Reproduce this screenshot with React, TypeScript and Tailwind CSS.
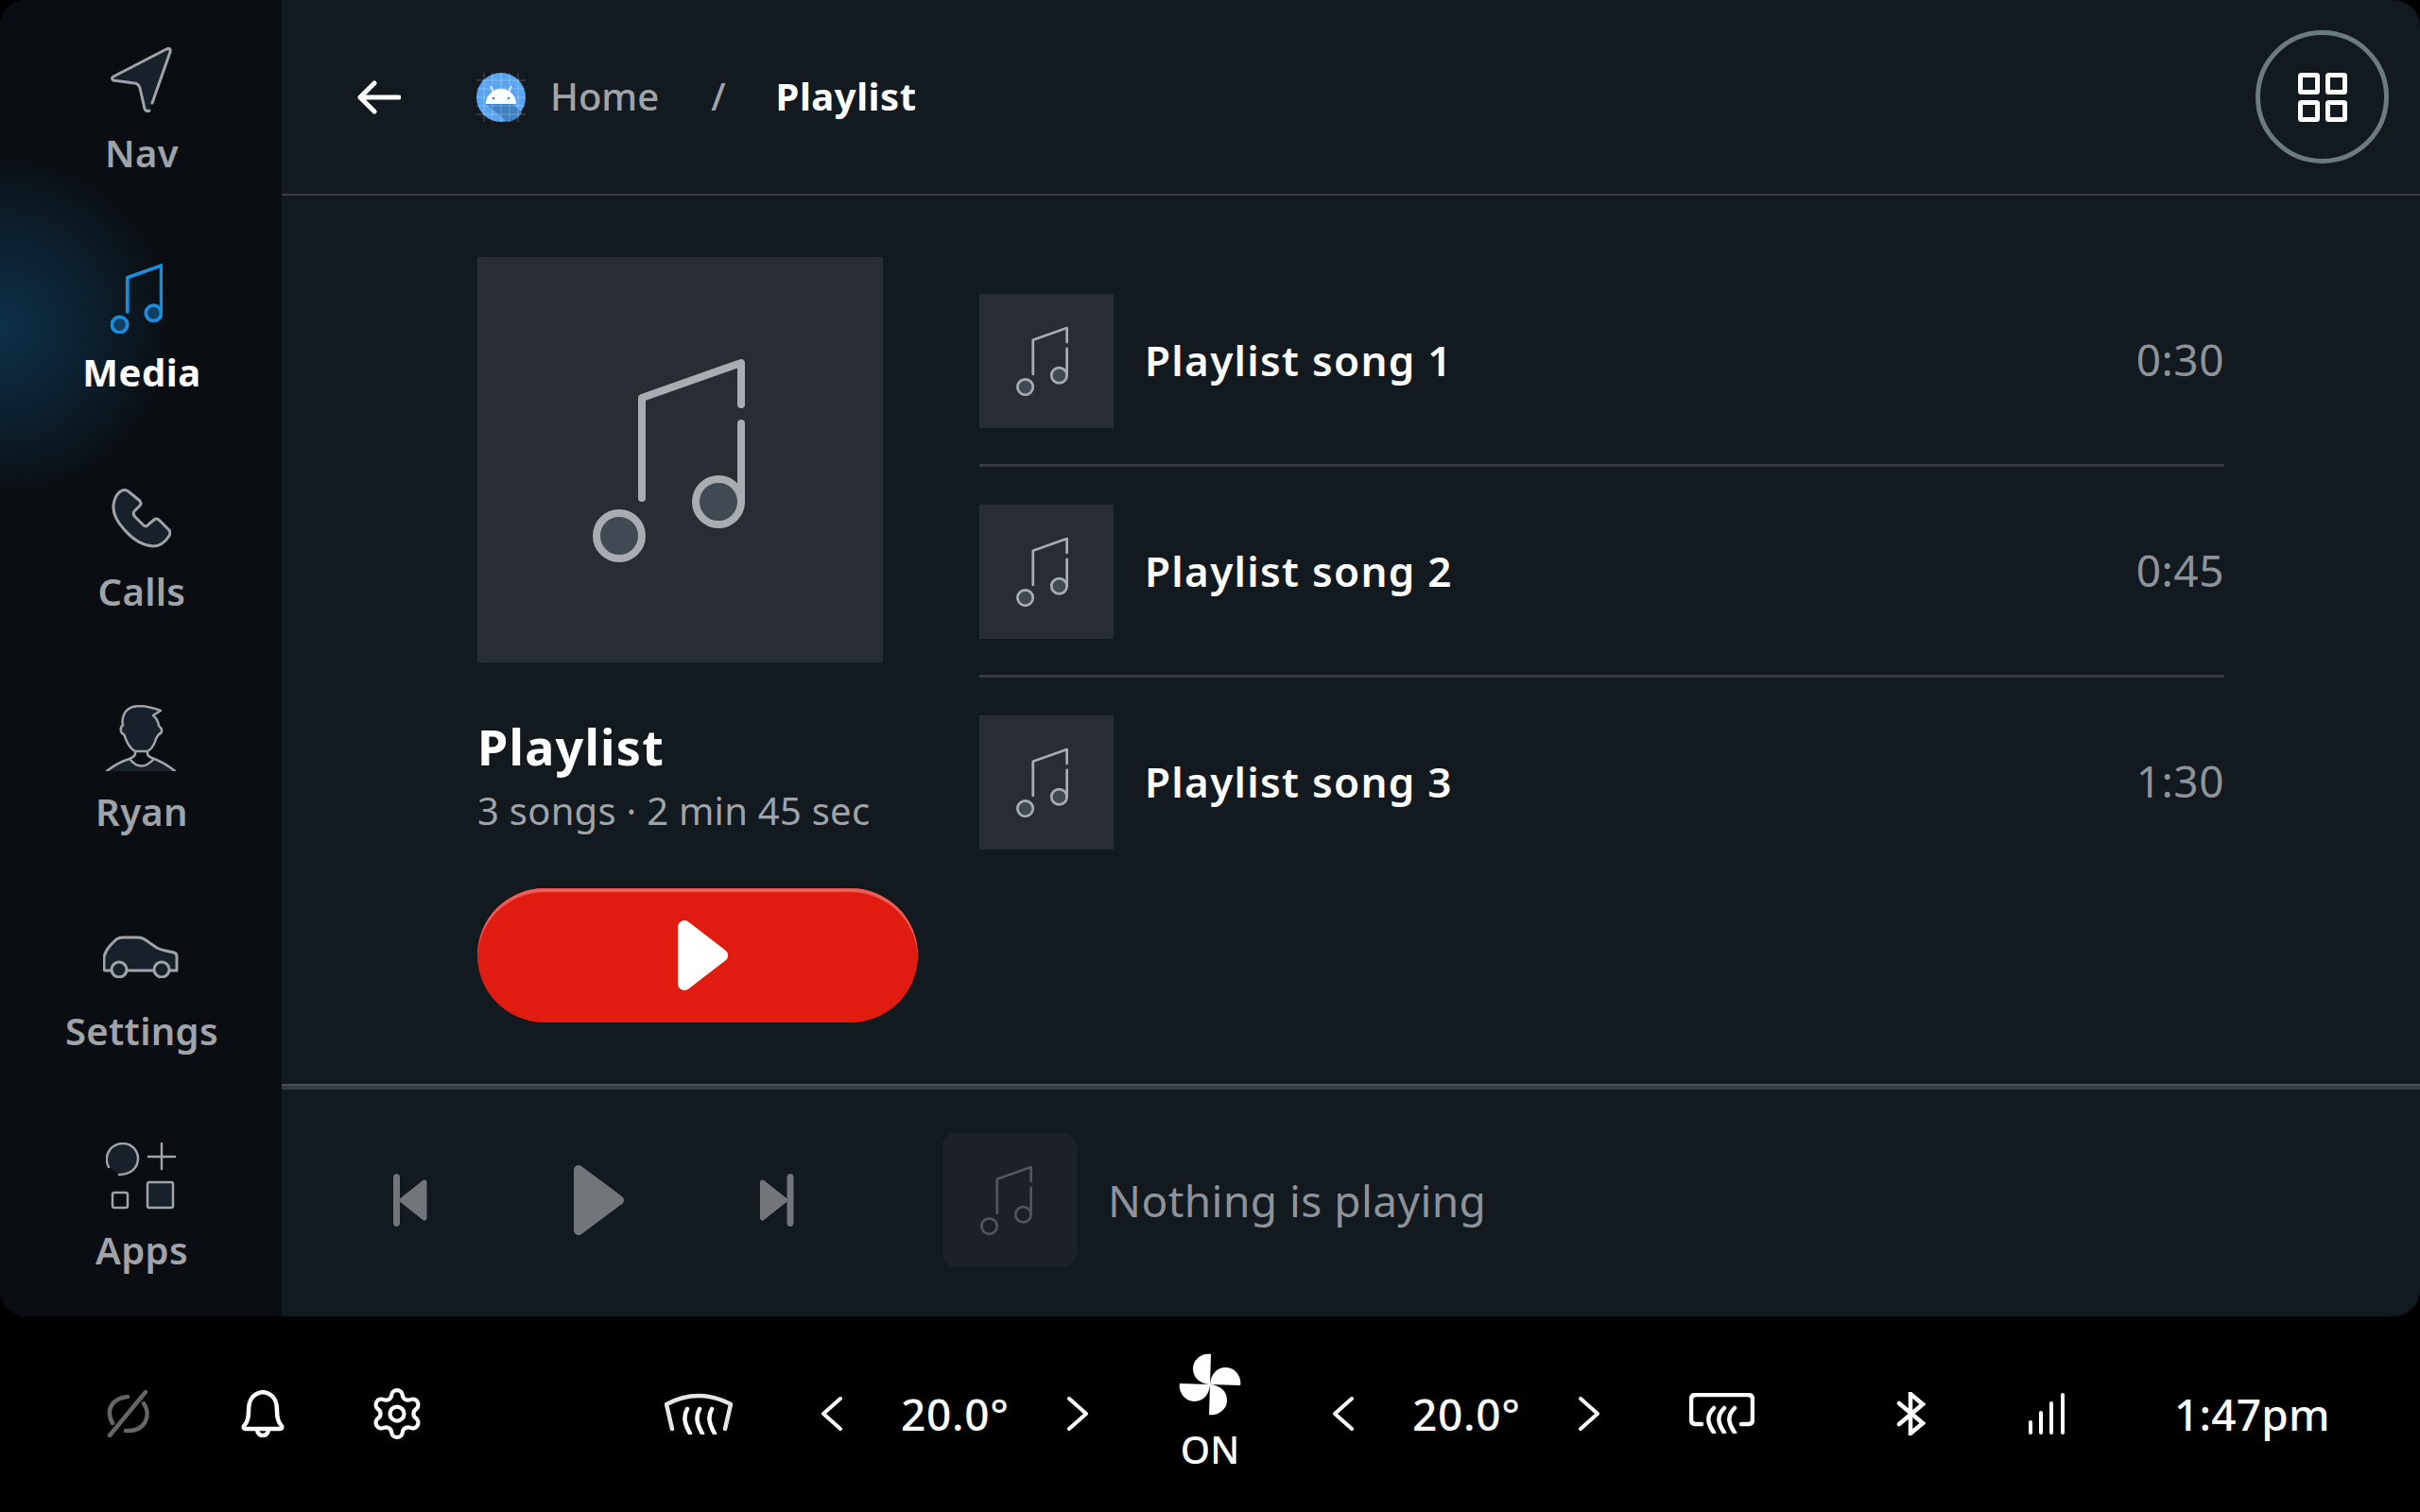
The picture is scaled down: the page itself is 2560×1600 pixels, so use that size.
import { Settings } from 'lucide-react'

const grey = '#a0a4a8'
const darkFill = '#18202a'

function Note({ w, stroke, fill, sw = 8, gap = true }: { w: number; stroke: string; fill: string; sw?: number; gap?: boolean }) {
  return (
    <svg width={w} height={(w * 217) / 161} viewBox="0 0 161 217" fill="none" stroke={stroke} strokeWidth={sw} strokeLinecap="round" strokeLinejoin="round">
      <circle cx="28" cy="189" r="24" fill={fill} />
      <circle cx="133" cy="153" r="24" fill={fill} />
      <path d="M52 149V43L157 6V50" />
      <path d={gap ? 'M157 70V153' : 'M157 50V153'} />
    </svg>
  )
}

function NavIcon() {
  return (
    <svg width="65" height="69" viewBox="0 0 65 69" fill={darkFill} stroke={grey} strokeWidth="3" strokeLinecap="round" strokeLinejoin="round">
      <path d="M44 59L63 5Q64 0 59 2L3 31Q0 33 3 35L25 38Q29 38 31 43L36 65Q38 69 41 67" />
    </svg>
  )
}

function PhoneIcon() {
  return (
    <svg width="63" height="63" viewBox="0 0 63 63" fill={darkFill} stroke={grey} strokeWidth="3" strokeLinejoin="round">
      <path d="M8 4Q14 -1 19 4L30 13Q32 16 30 18L24 24Q22 27 25 30L34 39Q37 41 39 38L45 33Q47 31 50 33L61 44Q63 47 61 50Q54 61 44 61Q28 60 14 44Q1 30 2 18Q3 9 8 4Z" />
    </svg>
  )
}

function PersonIcon() {
  return (
    <svg width="74" height="70" viewBox="0 0 74 70" fill="none" stroke={grey} strokeWidth="2.5" strokeLinecap="round" strokeLinejoin="round">
      <path d="M1 70Q12 62 25 57Q37 72 51 57Q62 62 73 70Z" fill={darkFill} stroke="none" />
      <path d="M58 6Q45 1 35 1Q20 2 18 14Q17 18 18 21Q14 25 17 30Q20 31 21 36Q25 46 31 49H44Q50 46 53 36Q55 31 58 30Q61 26 56 22Q55 15 50 11Z" fill={darkFill} />
      <path d="M31 49V52Q30 55 25 57Q12 61 1 70" />
      <path d="M44 49V52Q45 55 51 57Q62 61 73 70" />
      <path d="M25 57Q37 72 51 57" />
    </svg>
  )
}

function CarIcon() {
  return (
    <svg width="80" height="45" viewBox="0 0 80 45" fill={darkFill} stroke={grey} strokeWidth="3" strokeLinejoin="round">
      <path d="M9 37H3Q1 37 1 35V23Q2 17 8 10L14 4Q17 2 21 2H37Q41 2 44 4L57 13Q61 15 66 16L75 18Q78 19 78 22V37H70M25 37H54" />
      <circle cx="17" cy="36" r="8" />
      <circle cx="62" cy="36" r="8" />
    </svg>
  )
}

function AppsIcon() {
  return (
    <svg width="75" height="71" viewBox="0 0 75 71" fill="none" stroke={grey} strokeWidth="2.5" strokeLinecap="round" strokeLinejoin="round">
      <path d="M3 26Q0 20 1 16C2 7 9 1 18 1C27 1 34 8 34 17C34 26 27 34 14 34" fill={darkFill} />
      <path d="M45 15H73M59 1V28" />
      <rect x="7" y="53" width="16" height="16" rx="2" />
      <rect x="44" y="42" width="27" height="27" rx="2" fill={darkFill} />
    </svg>
  )
}

function AndroidLogo() {
  const grid = [8, 17, 26, 35, 44]
  return (
    <svg width="52" height="52" viewBox="0 0 52 52">
      <circle cx="26" cy="26" r="26" fill="#5aa5ef" />
      <path d="M10 33L33 52Q44 50 48 42L38 33Z" fill="#3f7fc4" />
      {grid.map((g) => (
        <g key={g} stroke="#ffffff" strokeOpacity="0.25" strokeWidth="1">
          <path d={`M${g} 0V52`} />
          <path d={`M0 ${g}H52`} />
        </g>
      ))}
      <path d="M10 33A16 16 0 0 1 42 33Z" fill="#ffffff" />
      <path d="M15 14L18 21M37 14L34 21" stroke="#ffffff" strokeWidth="1.5" />
      <circle cx="18" cy="27" r="1.3" fill="#3f7fc4" />
      <circle cx="34" cy="27" r="1.3" fill="#3f7fc4" />
    </svg>
  )
}

function GridIcon() {
  return (
    <svg width="52" height="52" viewBox="0 0 52 52" fill="none" stroke="#ffffff" strokeWidth="5" strokeLinejoin="round">
      <rect x="2.5" y="2.5" width="18" height="18" rx="1" />
      <rect x="31.5" y="2.5" width="18" height="18" rx="1" />
      <rect x="2.5" y="31.5" width="18" height="18" rx="1" />
      <rect x="31.5" y="31.5" width="18" height="18" rx="1" />
    </svg>
  )
}

function Fan() {
  const blade = 'M33 33L34 1C26 -1 15 6 15 16C15 26 22 32 33 33Z'
  return (
    <svg width="66" height="66" viewBox="0 0 66 66" fill="#ffffff">
      <path d={blade} />
      <path d={blade} transform="rotate(90 33 33)" />
      <path d={blade} transform="rotate(180 33 33)" />
      <path d={blade} transform="rotate(270 33 33)" />
    </svg>
  )
}

function Chevron({ left }: { left?: boolean }) {
  return (
    <svg width="24" height="36" viewBox="0 0 24 36" fill="none" stroke="#ffffff" strokeWidth="4" strokeLinecap="round" strokeLinejoin="round">
      <path d={left ? 'M21 2L3 18L21 34' : 'M3 2L21 18L3 34'} />
    </svg>
  )
}

const navItems = [
  { label: 'Nav', icon: <NavIcon /> },
  {
    label: 'Media',
    icon: (
      <div className="pr-[10px]">
        <Note w={55} stroke="#1a8cdb" fill="#123f5f" sw={11} gap={false} />
      </div>
    ),
    active: true,
  },
  { label: 'Calls', icon: <PhoneIcon /> },
  { label: 'Ryan', icon: <PersonIcon /> },
  { label: 'Settings', icon: <CarIcon /> },
  { label: 'Apps', icon: <AppsIcon /> },
]

const songs = [
  { title: 'Playlist song 1', time: '0:30' },
  { title: 'Playlist song 2', time: '0:45' },
  { title: 'Playlist song 3', time: '1:30' },
]

function Sidebar() {
  return (
    <aside className="relative grid h-full w-[298px] shrink-0 grid-rows-6 overflow-hidden bg-[#0a0e12]">
      {/* glow behind the active item */}
      <div className="absolute left-[-180px] top-[165px] h-[360px] w-[360px] rounded-full bg-[radial-gradient(circle,#0e3049_0%,#0c1f2c_40%,#0a0e1200_72%)]"></div>
      {navItems.map((item) => (
        <div key={item.label} className="relative flex flex-col items-center gap-[13px] pt-[44px]">
          <div className="flex h-[80px] items-center justify-center">{item.icon}</div>
          <span className={`pl-[2px] text-[40px] leading-[50px] ${item.active ? 'font-bold tracking-[0.5px] text-white' : 'font-semibold tracking-[0.3px] text-[#a0a4a8]'}`}>{item.label}</span>
        </div>
      ))}
    </aside>
  )
}

function Header() {
  return (
    <header className="flex h-[207px] shrink-0 items-center border-b-2 border-[#3a3d45] pl-[80px] pr-[33px]">
      <svg width="46" height="36" viewBox="0 0 46 36" fill="none" stroke="#ffffff" strokeWidth="5" strokeLinecap="round" strokeLinejoin="round">
        <path d="M44 18H3M18 3L3 18L18 33" />
      </svg>
      <div className="ml-[80px]"><AndroidLogo /></div>
      <span className="ml-[26px] pb-[2px] text-[40px] font-medium leading-[50px] text-[#a0a4a8]">Home</span>
      <span className="ml-[55px] pb-[2px] text-[40px] font-medium leading-[50px] text-[#a0a4a8]">/</span>
      <span className="ml-[53px] pb-[2px] text-[40px] font-bold leading-[50px] tracking-[0.5px] text-white">Playlist</span>
      <button className="ml-auto flex h-[141px] w-[141px] items-center justify-center rounded-full border-[5px] border-[#6c7a82]">
        <GridIcon />
      </button>
    </header>
  )
}

function PlaylistInfo() {
  return (
    <div className="w-[466px] shrink-0">
      <div className="flex h-[429px] w-[429px] items-center justify-center bg-[#282c33] pr-[24px]">
        <Note w={161} stroke="#a9adb1" fill="#414a52" />
      </div>
      <h1 className="mt-[59px] text-[52px] font-bold leading-[60px] tracking-[1.2px] text-white">Playlist</h1>
      <p className="mt-[13px] text-[40px] leading-[50px] tracking-[0.25px] text-[#a0a4a8]">3 songs · 2 min 45 sec</p>
      <button className="mt-[57px] flex h-[142px] w-[466px] items-center justify-center rounded-full bg-[#e01c10] pl-[11px] shadow-[inset_0_4px_1px_#e9605a]">
        <svg width="53" height="74" viewBox="0 0 53 74" fill="#ffffff" stroke="#ffffff" strokeWidth="14" strokeLinejoin="round">
          <path d="M7 7L46 37L7 67Z" />
        </svg>
      </button>
    </div>
  )
}

function SongRow({ title, time, last }: { title: string; time: string; last: boolean }) {
  return (
    <div className={last ? '' : 'mb-[40px] border-b-[3px] border-[#373a42] pb-[38px]'}>
      <div className="flex items-center">
        <div className="flex h-[142px] w-[142px] shrink-0 items-center justify-center bg-[#282c33] pr-[10px]">
          <Note w={55} stroke="#a9adb1" fill="#414a52" sw={8} />
        </div>
        <span className="mb-[3px] ml-[33px] text-[44px] font-semibold tracking-[1.3px] text-white">{title}</span>
        <span className="mb-[4px] ml-auto text-[46px] tracking-[0.5px] text-[#8f9399]">{time}</span>
      </div>
    </div>
  )
}

function Player() {
  return (
    <div className="flex h-[246px] shrink-0 flex-col">
      <div className="h-[6px] border-t-2 border-[#4a5055] bg-[#363b42]"></div>
      <div className="flex flex-1 items-center pb-[6px] pl-[118px]">
        <svg width="36" height="56" viewBox="0 0 36 56" fill="#72767a" stroke="#72767a" strokeLinejoin="round">
          <rect x="0.5" y="0.5" width="6" height="55" rx="3" />
          <path d="M33 9L9 28L33 47Z" strokeWidth="5" />
        </svg>
        <svg className="ml-[155px]" width="53" height="74" viewBox="0 0 53 74" fill="#72767a" stroke="#72767a" strokeWidth="10" strokeLinejoin="round">
          <path d="M5 5L48 37L5 69Z" />
        </svg>
        <svg className="ml-[143px]" width="37" height="56" viewBox="0 0 36 56" fill="#72767a" stroke="#72767a" strokeLinejoin="round">
          <rect x="29.5" y="0.5" width="6" height="55" rx="3" />
          <path d="M3 9L27 28L3 47Z" strokeWidth="5" />
        </svg>
        <div className="ml-[157px] flex h-[142px] w-[142px] items-center justify-center rounded-[14px] bg-[#1b2127] pr-[8px]">
          <Note w={55} stroke="#51565c" fill="#1b2127" sw={8} />
        </div>
        <span className="ml-[33px] text-[46px] tracking-[0.45px] text-[#8f9399]">Nothing is playing</span>
      </div>
    </div>
  )
}

function ClimateBar() {
  return (
    <footer className="flex h-[207px] shrink-0 items-center bg-black pb-[2px] pl-[113px] text-white">
      {/* sync off */}
      <svg width="46" height="50" viewBox="0 0 46 50" fill="none" stroke="#666666" strokeWidth="4.5" strokeLinecap="round">
        <path d="M41 2L3 48" />
        <path d="M6 35C-1 22 4 9 22 7" />
        <path d="M39 14C47 26 42 44 20 43" />
      </svg>
      <svg className="ml-[96px]" width="46" height="50" viewBox="0 0 46 50" fill="none" stroke="#ffffff" strokeWidth="4.5" strokeLinecap="round" strokeLinejoin="round">
        <path d="M23 2C10 4 8 13 8 22C8 30 7 34 3 38Q2 41 5 41H41Q44 41 43 38C39 34 38 30 38 22C38 13 36 4 23 2Z" />
        <path d="M17 42C18 50 28 50 29 42" />
      </svg>
      <Settings className="ml-[89px]" size={60} color="#ffffff" strokeWidth={1.7} />
      <svg className="ml-[253px]" width="72" height="44" viewBox="0 0 72 44" fill="none" stroke="#e6e6e6" strokeWidth="4.5" strokeLinecap="round" strokeLinejoin="round">
        <path d="M8 38L2 12Q36 -6 70 12L64 38" />
        <path d="M24 17C19 26 22 34 27 43M37 17C32 26 35 34 40 43M50 17C45 26 48 34 53 43" stroke="#ffffff" />
      </svg>
      <div className="ml-[93px] flex items-center"><Chevron left /></div>
      <span className="ml-[61px] w-[114px] text-[46px] font-medium leading-[60px] tracking-[0.7px]">20.0°</span>
      <div className="ml-[61px] flex items-center"><Chevron /></div>
      <div className="ml-[95px] flex w-[66px] flex-col items-center pb-[2px]">
        <Fan />
        <span className="mt-[13px] text-[40px] font-medium leading-[46px]">ON</span>
      </div>
      <div className="ml-[96px] flex items-center"><Chevron left /></div>
      <span className="ml-[61px] w-[114px] text-[46px] font-medium leading-[60px] tracking-[0.7px]">20.0°</span>
      <div className="ml-[61px] flex items-center"><Chevron /></div>
      <svg className="ml-[94px]" width="69" height="43" viewBox="0 0 69 43" fill="none" stroke="#ffffff" strokeWidth="4.5" strokeLinecap="round" strokeLinejoin="round">
        <path d="M13 33H7Q2 33 2 28V7Q2 2 7 2H62Q67 2 67 7V28Q67 33 62 33H55" />
        <path d="M26 16C17 25 20 33 26 42M37 16C28 25 31 33 37 42M48 16C39 25 42 33 48 42" />
      </svg>
      <svg className="ml-[150px]" width="31" height="46" viewBox="0 0 31 46" fill="none" stroke="#ffffff" strokeWidth="4.5" strokeLinecap="round" strokeLinejoin="miter">
        <path d="M3 12L28 33L15 44V2L28 13L3 34" />
      </svg>
      <svg className="ml-[109px]" width="38" height="44" viewBox="0 0 38 44" fill="none" stroke="#ffffff" strokeWidth="4" strokeLinecap="round">
        <path d="M2 31V42M13 21V42M24 11V42M36 2V42" />
      </svg>
      <span className="ml-[116px] text-[46px] font-medium leading-[60px] tracking-[0.2px]">1:47pm</span>
    </footer>
  )
}

export default function App() {
  return (
    <div className="flex h-[1600px] w-[2560px] flex-col bg-black font-['Noto_Sans',sans-serif]">
      <div className="flex h-[1393px] shrink-0 overflow-hidden rounded-[28px] bg-[#121a20]">
        <Sidebar />
        <main className="flex min-w-0 flex-1 flex-col">
          <Header />
          <section className="flex flex-1 pl-[207px] pt-[65px]">
            <PlaylistInfo />
            <div className="ml-[65px] w-[1317px] pt-[39px]">
              {songs.map((song, i) => (
                <SongRow key={song.title} title={song.title} time={song.time} last={i === songs.length - 1} />
              ))}
            </div>
          </section>
          <Player />
        </main>
      </div>
      <ClimateBar />
    </div>
  )
}
